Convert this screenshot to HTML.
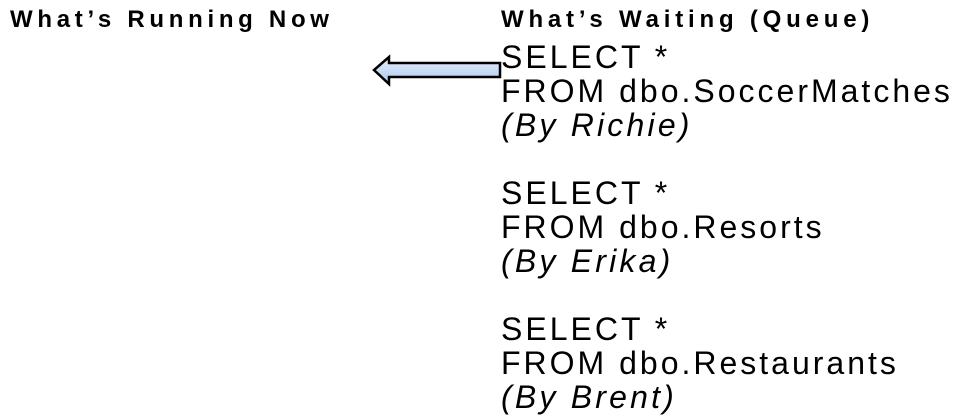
<!DOCTYPE html>
<html><head><meta charset="utf-8"><style>
html,body{margin:0;padding:0;background:#fff;width:962px;height:419px;overflow:hidden;position:relative}
.h{position:absolute;font-family:"Liberation Sans",sans-serif;font-weight:bold;font-size:24px;letter-spacing:4.7px;color:#000;line-height:1;white-space:nowrap}
.b{position:absolute;left:501px;font-family:"Liberation Sans",sans-serif;font-size:32px;letter-spacing:3px;color:#000;line-height:1;white-space:nowrap}
.i{font-style:italic;letter-spacing:3.2px}
</style></head><body>
<div class="h" style="left:10px;top:8px">What’s Running Now</div>
<div class="h" style="left:501px;top:8px;letter-spacing:4.8px">What’s Waiting (Queue)</div>
<svg style="position:absolute;left:0;top:0" width="962" height="419">
<defs><linearGradient id="g" x1="0" y1="0" x2="0" y2="1"><stop offset="0" stop-color="#e6f0fb"/><stop offset="1" stop-color="#a9c8ec"/></linearGradient></defs>
<path d="M500,63 L389,63 L389,57 L374,70 L389,84 L389,77 L500,77 Z" fill="url(#g)" stroke="#000" stroke-width="2.5" stroke-linejoin="miter"/>
</svg>
<div class="b" style="top:41px">SELECT *</div>
<div class="b" style="top:75px">FROM dbo.SoccerMatches</div>
<div class="b i" style="top:109px">(By Richie)</div>
<div class="b" style="top:177px">SELECT *</div>
<div class="b" style="top:211px">FROM dbo.Resorts</div>
<div class="b i" style="top:245px">(By Erika)</div>
<div class="b" style="top:313px">SELECT *</div>
<div class="b" style="top:347px">FROM dbo.Restaurants</div>
<div class="b i" style="top:381px">(By Brent)</div>
</body></html>
